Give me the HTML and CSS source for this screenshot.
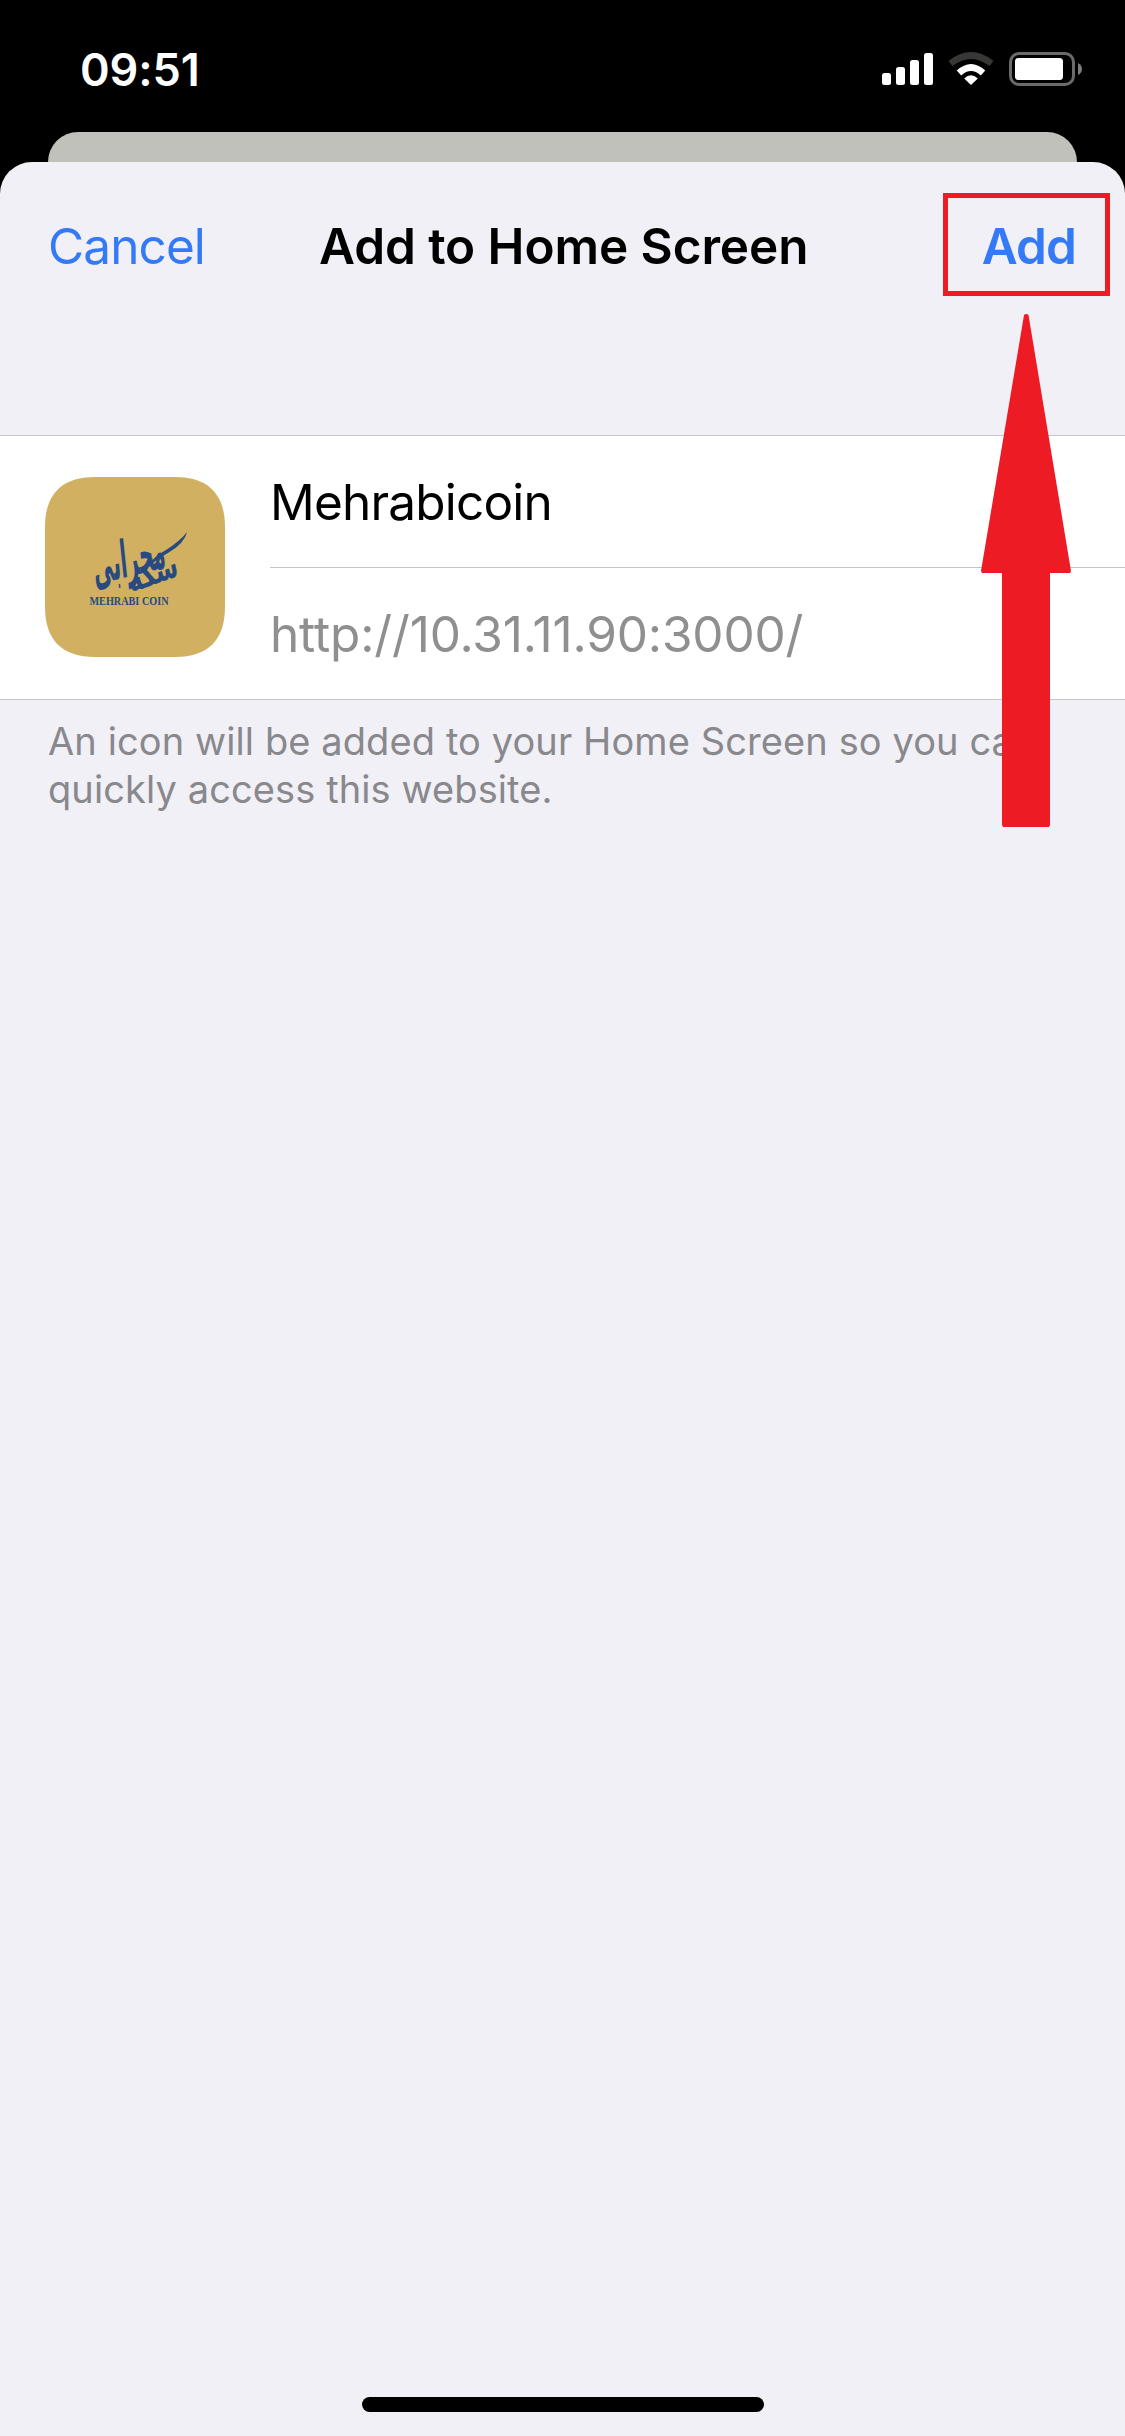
FILE: index.html
```html
<!DOCTYPE html>
<html lang="en">
<head>
<meta charset="utf-8">
<title>Add to Home Screen</title>
<link rel="stylesheet" href="styles.css">
</head>
<body>
<div class="screen">
  <header class="status">
    <span class="time">09:51</span>
    <svg class="indicators" width="202" height="36" viewBox="0 0 202 36" aria-hidden="true">
      <g fill="#fff">
        <rect x="1" y="22" width="9" height="12" rx="2.5"/>
        <rect x="15" y="16" width="9" height="18" rx="2.5"/>
        <rect x="29" y="9" width="9" height="25" rx="2.5"/>
        <rect x="43" y="2" width="9" height="32" rx="2.5"/>
        <path d="M90 34L83.2 27.4Q90 21 96.8 27.4Z"/>
      </g>
      <path d="M78 22Q90 11 102 22" fill="none" stroke="#fff" stroke-width="6.6"/>
      <path d="M69.500 12.500Q90 -3.500 110.500 12.500" fill="none" stroke="#373735" stroke-width="6.6"/>
      <rect x="129.500" y="2.500" width="63" height="31" rx="8.500" fill="none" stroke="#6b6b6b" stroke-width="3"/>
      <rect x="134" y="7" width="48" height="22" rx="3.500" fill="#fff"/>
      <path d="M197 12q4 2 4 6t-4 6z" fill="#7d7d7b"/>
    </svg>
  </header>
  <div class="backcard"></div>
  <main class="sheet">
    <nav class="bar">
      <span class="cancel">Cancel</span>
      <h1 class="title">Add to Home Screen</h1>
      <span class="add">Add</span>
    </nav>
    <section class="entry">
      <svg class="appicon" width="180" height="180" viewBox="0 0 180 180">
        <path d="M0 50C0 17 17 0 50 0H130C163 0 180 17 180 50V130C180 163 163 180 130 180H50C17 180 0 163 0 130Z" fill="#d1b062"/>
        <g fill="#284a80">
          <text class="script" transform="translate(50 108) rotate(-14) skewX(-8) scale(.8 2.05)">محرابی</text>
          <text class="script" transform="translate(86 116) rotate(-20) skewX(-8) scale(.95 1.35)">سکه</text>
          <path d="M104 88Q108 80 121 73Q135 64 142 55Q140 66 123 76Q110 83 104 90Z"/>
          <text class="latin" x="44.500" y="127.500" textLength="79" lengthAdjust="spacingAndGlyphs">MEHRABI COIN</text>
        </g>
      </svg>
      <div class="fields">
        <div class="field name">Mehrabicoin</div>
        <div class="field url">http://10.31.11.90:3000/</div>
      </div>
    </section>
    <p class="note"><span class="line1">An icon will be added to your Home Screen so you can</span><br><span class="line2">quickly access this website.</span></p>
    <div class="home"></div>
  </main>
  <div class="highlight"></div>
  <svg class="arrow" width="92" height="516" viewBox="0 0 92 516" aria-hidden="true">
    <path d="M44 2Q46.300 0 48.500 2L91 258L90 260H70V512L69 514H23L22 512V260H2L1 258Z" fill="#ed1c24"/>
  </svg>
</div>
</body>
</html>
```
FILE: styles.css
```css
* { box-sizing: border-box; }
body { margin: 0; }
.screen {
  position: relative;
  display: flex;
  flex-direction: column;
  width: 1125px;
  height: 2436px;
  background: #000;
  font-family: Inter, "Liberation Sans", sans-serif;
  font-size: 49.5px;
  white-space: nowrap;
}
.status {
  display: flex;
  justify-content: space-between;
  align-items: flex-start;
  height: 132px;
  padding: 51px 42px 0 80px;
  color: #fff;
}
.time { font-size: 45px; font-weight: 600; line-height: 37px; letter-spacing: -.1px; }
.backcard {
  flex: none;
  height: 90px;
  margin: 0 48px -60px;
  border-radius: 30px 30px 0 0;
  background: #c0c1ba;
}
.sheet {
  display: flex;
  flex: 1;
  flex-direction: column;
  border-radius: 32px 32px 0 0;
  background: #f1f0f6;
}
.bar {
  display: flex;
  justify-content: space-between;
  height: 273px;
  padding: 54px 49px 0 48px;
  line-height: 60px;
}
.title { flex: 1; margin: 0; font-size: inherit; font-weight: 600; letter-spacing: -.08px; }
.cancel, .add { color: #347af6; letter-spacing: -.9px; }
.cancel { width: 271px; }
.add { font-weight: 600; }
.entry {
  display: flex;
  height: 265px;
  padding-left: 45px;
  align-items: flex-start;
  gap: 45px;
  border-top: 1px solid #c5c5c8;
  border-bottom: 1px solid #c5c5c8;
  background: #fff;
}
.appicon { margin-top: 41px; }
.fields { flex: 1; }
.field { height: 131px; line-height: 133px; }
.name { height: 132px; border-bottom: 1px solid #c5c5c8; color: #000; letter-spacing: -.8px; }
.url { color: #8f8f8f; letter-spacing: -.15px; }
.note { margin: 17px 0 0 48px; color: #88888d; font-size: 38px; line-height: 48px; letter-spacing: .1px; }
.home { width: 402px; height: 15px; margin: auto auto 24px; border-radius: 8px; background: #000; }
.highlight {
  position: absolute;
  left: 943px;
  top: 193px;
  width: 167px;
  height: 103px;
  border: 5px solid #ed1c24;
}
.arrow { position: absolute; left: 980px; top: 313px; }
.script { font-family: "DejaVu Sans", sans-serif; font-size: 25px; font-weight: 700; }
.latin { font-family: "Liberation Serif", serif; font-size: 11.5px; font-weight: 700; }
```
